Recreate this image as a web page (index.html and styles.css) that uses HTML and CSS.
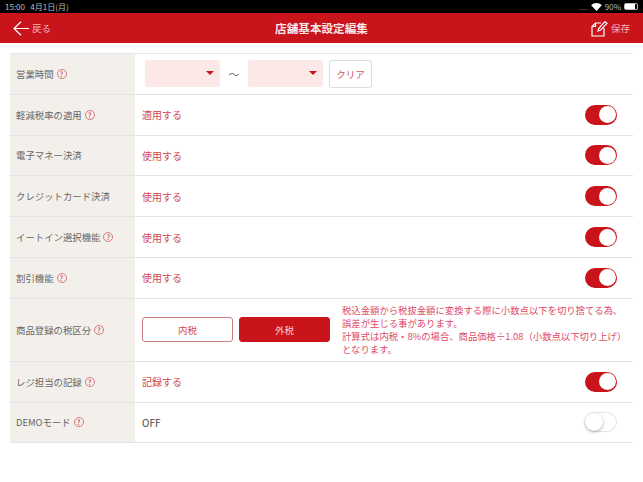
FILE: index.html
```html
<!DOCTYPE html>
<html lang="ja">
<head>
    <meta charset="utf-8">
    <title>店舗基本設定編集</title>
    <link rel="stylesheet" href="styles.css">
</head>
<body>
    <div class="status-bar">
        <span class="status-time">15:00&nbsp;&nbsp;&nbsp;4月1日(月)</span>
        <span class="status-right">
            <span class="status-dots">....</span>
            <svg class="wifi" width="11" height="8" viewBox="0 0 12 9"><path d="M6 9 L0 2.6 C3.4 -.8 8.6 -.8 12 2.6 Z" fill="#fff"/></svg>
            <span>90%</span>
            <span class="battery"><span class="battery-fill"></span></span>
        </span>
    </div>

    <header class="top-bar">
        <div class="top-left">
            <svg width="16" height="15" viewBox="0 0 16 15" fill="none" stroke="#fff" stroke-width="1.2"><path d="M16 7.5 H1 M8 .8 L1 7.5 L8 14.2"/></svg>
            <span class="top-link">戻る</span>
        </div>
        <div class="top-title">店舗基本設定編集</div>
        <div class="top-right">
            <svg width="17" height="17" viewBox="0 0 17 17" fill="none" stroke="#fff" stroke-width="1.2"><path d="M10 3 H4.5 L1 6.5 V16 H13 V8"/><path d="M1 6.5 H4.5 V3"/><path d="M7 11 L7.8 8.4 L14 1.5 L16 3.3 L9.6 10 Z"/></svg>
            <span class="top-link">保存</span>
        </div>
    </header>

    <main class="settings">
        <div class="row">
            <div class="row-label">営業時間 <span class="help">?</span></div>
            <div class="row-body">
                <div class="select"><span class="caret"></span></div>
                <span class="tilde">〜</span>
                <div class="select"><span class="caret"></span></div>
                <button class="clear-btn">クリア</button>
            </div>
        </div>
        <div class="row">
            <div class="row-label">軽減税率の適用 <span class="help">?</span></div>
            <div class="row-body"><span class="value">適用する</span><span class="switch on"></span></div>
        </div>
        <div class="row">
            <div class="row-label">電子マネー決済</div>
            <div class="row-body"><span class="value">使用する</span><span class="switch on"></span></div>
        </div>
        <div class="row">
            <div class="row-label">クレジットカード決済</div>
            <div class="row-body"><span class="value">使用する</span><span class="switch on"></span></div>
        </div>
        <div class="row">
            <div class="row-label">イートイン選択機能 <span class="help">?</span></div>
            <div class="row-body"><span class="value">使用する</span><span class="switch on"></span></div>
        </div>
        <div class="row">
            <div class="row-label">割引機能 <span class="help">?</span></div>
            <div class="row-body"><span class="value">使用する</span><span class="switch on"></span></div>
        </div>
        <div class="row row-tall">
            <div class="row-label">商品登録の税区分 <span class="help">?</span></div>
            <div class="row-body">
                <button class="tax-btn">内税</button>
                <button class="tax-btn active">外税</button>
                <p class="tax-note">税込金額から税抜金額に変換する際に小数点以下を切り捨てる為、<br>誤差が生じる事があります。<br>計算式は内税・8%の場合、商品価格÷1.08（小数点以下切り上げ）<br>となります。</p>
            </div>
        </div>
        <div class="row">
            <div class="row-label">レジ担当の記録 <span class="help">?</span></div>
            <div class="row-body"><span class="value">記録する</span><span class="switch on"></span></div>
        </div>
        <div class="row">
            <div class="row-label">DEMOモード <span class="help">?</span></div>
            <div class="row-body"><span class="value off">OFF</span><span class="switch"></span></div>
        </div>
    </main>
</body>
</html>
```

FILE: styles.css
```css
body {
    margin: 0;
    background: #fff;
    font-family: "Noto Sans CJK JP", "Noto Sans", sans-serif;
    color: #555;
}
.status-bar {
    height: 13px;
    background: #000;
    color: #bbb;
    font-size: 8px;
    line-height: 13px;
    display: flex;
    justify-content: space-between;
    padding: 0 5px 0 5px;
}
.status-right {
    display: flex;
    align-items: center;
    gap: 3px;
}
.status-dots { color: #777; }
.battery {
    width: 12px;
    height: 5px;
    border: 1px solid #bbb;
    border-radius: 2px;
    display: block;
}
.battery-fill {
    display: block;
    width: 10px;
    height: 5px;
    background: #fff;
}
.top-bar {
    height: 30px;
    background: #c9141b;
    display: flex;
    align-items: center;
    justify-content: space-between;
    padding: 0 13px 0 13px;
    color: #fff;
}
.top-left, .top-right {
    display: flex;
    align-items: center;
    gap: 3px;
    width: 60px;
}
.top-right { justify-content: flex-end; }
.top-link {
    font-size: 9.5px;
    color: #f4b6b8;
}
.top-title {
    font-size: 11.6px;
    font-weight: 700;
    color: #fbe9e9;
}
.settings {
    margin: 10px 10px 0;
    border-top: 1px solid #e6e6e6;
}
.row {
    display: flex;
    height: 39.8px;
    border-bottom: 1px solid #e4e4e4;
}
.row-tall { height: 62px; }
.row-label {
    width: 125px;
    flex: none;
    box-sizing: border-box;
    padding-left: 6px;
    background: #f3f0eb;
    font-size: 9.4px;
    display: flex;
    align-items: center;
    gap: 3px;
    color: #666;
}
.help {
    width: 8px;
    height: 8px;
    border: 1px solid #d8777b;
    border-radius: 50%;
    font-size: 7px;
    line-height: 8px;
    text-align: center;
    color: #c9141b;
}
.row-body {
    flex: 1;
    display: flex;
    align-items: center;
    padding: 0 16px 0 7px;
    font-size: 10px;
}
.value {
    flex: 1;
    color: #d0474d;
}
.value.off { color: #444; }
.switch {
    width: 32px;
    height: 20px;
    border-radius: 10px;
    background: #c9141b;
    position: relative;
    flex: none;
}
.switch::after {
    content: "";
    position: absolute;
    top: 1.5px;
    right: 1.5px;
    width: 17px;
    height: 17px;
    border-radius: 50%;
    background: #fff;
}
.switch:not(.on) {
    background: #fff;
    box-shadow: inset 0 0 0 1px #e4e4e4;
}
.switch:not(.on)::after {
    right: auto;
    left: 0;
    top: 1px;
    width: 18px;
    height: 18px;
    box-shadow: 0 1px 3px rgba(0, 0, 0, .35);
}
.select {
    width: 75px;
    height: 27px;
    background: #fde8e8;
    border-radius: 3px;
    margin-left: 3px;
    position: relative;
}
.tilde + .select { margin-left: 0; }
.caret {
    position: absolute;
    right: 6px;
    top: 11px;
    border: 4px solid transparent;
    border-top: 4px solid #c9141b;
    border-bottom: 0;
}
.tilde {
    width: 28px;
    text-align: center;
    color: #777;
    font-size: 11px;
}
.clear-btn {
    width: 43px;
    height: 28px;
    margin-left: 6px;
    background: #fff;
    border: 1.5px solid #ddd;
    border-radius: 3px;
    padding: 0;
    color: #c65a5f;
    font: inherit;
    font-size: 9.5px;
}
.tax-btn {
    width: 91px;
    height: 25px;
    background: #fff;
    border: 1px solid #cf7d80;
    border-radius: 3px;
    padding: 0;
    margin-right: 6px;
    color: #d0474d;
    font: inherit;
    font-size: 9.5px;
    flex: none;
}
.tax-btn.active {
    background: #c9141b;
    border-color: #c9141b;
    color: #f7d0d1;
}
.tax-note {
    margin: 0 0 0 6px;
    font-size: 9.35px;
    line-height: 12.8px;
    color: #dc4a68;
    white-space: nowrap;
}
```
